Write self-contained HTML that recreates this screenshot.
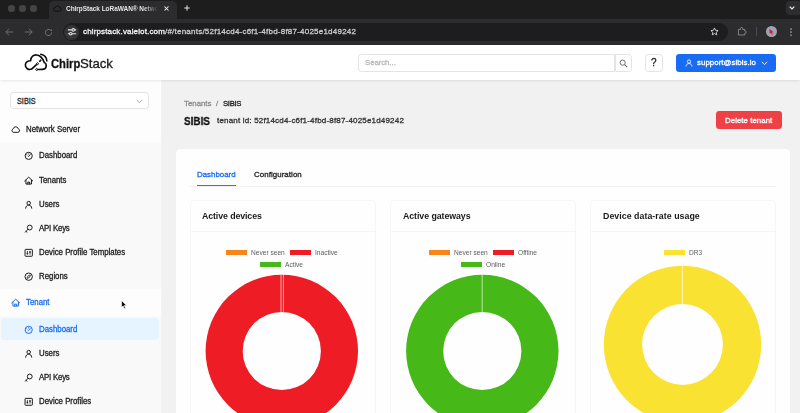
<!DOCTYPE html>
<html lang="en">
<head>
<meta charset="utf-8">
<title>ChirpStack LoRaWAN® Network Server</title>
<style>
*{box-sizing:border-box;margin:0;padding:0}
html,body{width:800px;height:413px;overflow:hidden;background:#f1f1f1;font-family:"Liberation Sans",Arial,sans-serif;color:#1f1f1f;font-size:7.7px;-webkit-font-smoothing:antialiased}
.abs{position:absolute}
.t{position:absolute;white-space:nowrap;line-height:10px;height:10px;transform:translateY(-50%);-webkit-text-stroke:.3px currentColor;will-change:transform}
/* ---------- browser chrome ---------- */
#chrome{position:absolute;left:0;top:0;width:800px;height:44.500px;background:#2c2c2e}
#tabstrip{position:absolute;left:0;top:0;width:800px;height:19px;background:#1d1d1e}
#tab{position:absolute;left:49px;top:1.200px;width:128px;height:17.800px;background:#2c2c2e;border-radius:5px 5px 0 0}
.light{position:absolute;top:5.2px;width:6.6px;height:6.6px;border-radius:50%;background:#454547}
#urlbar{position:absolute;left:63px;top:22.900px;width:665px;height:18.400px;border-radius:9.200px;background:#1d1d1f}
#siteinfo{position:absolute;left:1.400px;top:1.700px;width:15px;height:15px;border-radius:50%;background:#343436}
/* ---------- page ---------- */
#header{position:absolute;left:0;top:44.500px;width:800px;height:35px;background:#fff;box-shadow:0 1px 2.500px rgba(0,0,0,.09);z-index:5}
#sider{position:absolute;left:0;top:79px;width:162.300px;height:334px;background:#fdfdfd;border-right:1px solid #f3f3f3}
.subbg{position:absolute;left:0;width:161.300px;background:#f9f9f9}
.mi{position:absolute;white-space:nowrap;line-height:10px;height:10px;transform:translateY(-50%) scaleX(.95);transform-origin:0 50%;font-size:8.260px;color:#222;-webkit-text-stroke:.3px currentColor}
.ico{position:absolute;overflow:visible}
.btn{position:absolute;border-radius:3.3px;border:1px solid #e4e4e4;background:#fff}
.card{position:absolute;background:#fefefe;border:1px solid #f6f6f6;border-radius:4px}
.ctitle{will-change:transform;position:absolute;font-weight:700;font-size:8.8px;line-height:12px;height:12px;white-space:nowrap;transform:translateY(-50%);color:#1a1a1a}
.lg{position:absolute;height:5.600px}
.lt{will-change:transform;position:absolute;white-space:nowrap;font-size:6.6px;line-height:8px;height:8px;transform:translateY(-50%);color:#5c5c5c}
</style>
</head>
<body>

<!-- ================= BROWSER CHROME ================= -->
<div id="chrome">
  <div id="tabstrip">
    <div class="light" style="left:8.4px"></div>
    <div class="light" style="left:19.2px"></div>
    <div class="light" style="left:30px"></div>
    <div id="tab">
      <svg class="ico" style="left:4px;top:3.400px" width="8.600" height="6.700" viewBox="0 0 18 14"><path d="M5 12.800h9a3.500 3.500 0 0 0 .600-6.900A5 5 0 0 0 5 5 3.900 3.900 0 0 0 5 12.800z" fill="none" stroke="#0e0e0f" stroke-width="2"/></svg>
      <div class="t" style="left:17px;top:7.500px;font-size:6.500px;font-weight:700;letter-spacing:-.04px;-webkit-text-stroke:0;color:#e2e2e3;width:92px;overflow:hidden;-webkit-mask-image:linear-gradient(90deg,#000 84%,transparent 100%)">ChirpStack LoRaWAN® Network Server</div>
      <svg class="ico" style="left:115.300px;top:4.600px" width="5" height="5" viewBox="0 0 5 5"><path d="M.500.500l4 4M4.500.500l-4 4" stroke="#ededed" stroke-width="1.050" fill="none"/></svg>
    </div>
    <svg class="ico" style="left:183.500px;top:5.400px" width="6" height="6" viewBox="0 0 6 6"><path d="M3 .300v5.400M.300 3h5.400" stroke="#e4e4e4" stroke-width="1" fill="none"/></svg>
    <div class="abs" style="left:785.500px;top:1.200px;width:16px;height:14px;border-radius:4px;background:#2d2d2f"></div>
    <svg class="ico" style="left:789.200px;top:6.300px" width="6" height="4" viewBox="0 0 6 4"><path d="M.700.700 3 3 5.300.700" fill="none" stroke="#f0f0f0" stroke-width="1.200"/></svg>
  </div>
  <!-- nav buttons -->
  <svg class="ico" style="left:5px;top:28px" width="9" height="8" viewBox="0 0 9 8"><path d="M4 .8.8 4 4 7.2M.8 4h7.4" fill="none" stroke="#6c6c70" stroke-width="1"/></svg>
  <svg class="ico" style="left:24px;top:28px" width="9" height="8" viewBox="0 0 9 8"><path d="M5 .8 8.2 4 5 7.2M8.2 4H.8" fill="none" stroke="#6c6c70" stroke-width="1"/></svg>
  <svg class="ico" style="left:44px;top:27.5px" width="9" height="9" viewBox="0 0 9 9"><path d="M7.6 4.5a3.1 3.1 0 1 1-1-2.3" fill="none" stroke="#77777b" stroke-width="1"/><path d="M7.9.9v2.2H5.7z" fill="#77777b"/></svg>
  <div id="urlbar">
    <div id="siteinfo"></div>
    <svg class="ico" style="left:4.900px;top:5.400px" width="8" height="7.600" viewBox="0 0 8 7.600"><path d="M.300 1.900h3M6.600 1.900h1.100M.300 5.700h1.100M4.400 5.700h3.300" stroke="#e4e4e6" stroke-width="1.100" fill="none" stroke-linecap="round"/><circle cx="5.200" cy="1.900" r="1.250" fill="none" stroke="#e4e4e6" stroke-width="1.050"/><circle cx="2.800" cy="5.700" r="1.250" fill="none" stroke="#e4e4e6" stroke-width="1.050"/></svg>
    <div class="t" style="left:19.8px;top:9.2px;font-size:8px;letter-spacing:.225px;color:#c9c9cb"><span style="color:#f4f4f4;letter-spacing:.15px">chirpstack.valeiot.com</span>/#/tenants/52f14cd4-c6f1-4fbd-8f87-4025e1d49242</div>
    <svg class="ico" style="left:647px;top:4.600px" width="9" height="9" viewBox="0 0 24 24"><path d="M12 2.6l2.9 6.2 6.7.8-5 4.6 1.4 6.7-6-3.4-6 3.4 1.400-6.700-5-4.600 6.700-.800z" fill="none" stroke="#e8e8e8" stroke-width="2.2" stroke-linejoin="round"/></svg>
  </div>
  <!-- extension / avatar / menu -->
  <svg class="ico" style="left:736.700px;top:25.800px" width="9.600" height="9.600" viewBox="0 0 24 24"><path d="M3.500 8.500h5.300V6.300a2.700 2.700 0 0 1 5.400 0v2.200h5.300v4.300h1a2.600 2.600 0 0 1 0 5.200h-1v4.500h-16z" fill="none" stroke="#8f8f93" stroke-width="2.200" stroke-linejoin="round"/></svg>
  <div class="abs" style="left:755.5px;top:27px;width:1px;height:9px;background:#4d4d50"></div>
  <div class="abs" style="left:765.600px;top:26.100px;width:11.400px;height:11.400px;border-radius:50%;background:#a3a2b4"></div>
  <svg class="ico" style="left:768.200px;top:28.300px" width="6.500" height="6.500" viewBox="0 0 6 6"><path d="M1.300.800 5.200 3.900 3.600 4.100 4.400 5.700 3.400 5.900 2.600 4.400 1.500 5.300z" fill="#d01f2e"/></svg>
  <div class="abs" style="left:790.300px;top:28px;width:1.700px;height:1.700px;border-radius:50%;background:#77777b;box-shadow:0 3.100px 0 #77777b,0 6.200px 0 #77777b"></div>
</div>

<!-- ================= APP HEADER ================= -->
<div id="header">
  <!-- logo -->
  <svg class="ico" style="left:20.900px;top:4.500px" width="38" height="26.600" viewBox="0 0 590 413">
    <g fill="none" stroke="#0c0c0c" stroke-width="25" stroke-linecap="round" stroke-linejoin="round">
      <path d="M248 236 165 312C120 330 62 300 68 245C72 200 110 178 150 182C150 120 200 88 240 92C292 96 338 150 360 208C410 235 400 316 335 316L262 318"/>
      <path d="M308 82C358 91 398 132 401 186"/>
      <path d="M292 190l14-15" stroke-width="27"/>
    </g>
    <circle cx="256" cy="228" r="15" fill="#fff" stroke="#0c0c0c" stroke-width="15"/>
    <circle cx="243" cy="318" r="15" fill="#fff" stroke="#0c0c0c" stroke-width="15"/>
  </svg>
  <div class="t" style="left:50.600px;top:19.600px;font-size:12.800px;line-height:16px;height:16px;color:#111"><b style="display:inline-block;transform:scaleX(.875);transform-origin:0 50%">Chirp</b><span style="display:inline-block;font-weight:400;color:#1a1a1a;margin-left:-4.300px;transform:scaleX(1.03);transform-origin:0 50%">Stack</span></div>
  <!-- search -->
  <div class="btn" style="left:358px;top:9.700px;width:257px;height:17.400px;border-radius:3.300px 0 0 3.300px"></div>
  <div class="t" style="left:364.500px;top:18.500px;color:#b9b9b9">Search...</div>
  <div class="btn" style="left:614.500px;top:9.700px;width:17.500px;height:17.400px;border-radius:0 3.300px 3.300px 0"></div>
  <svg class="ico" style="left:619px;top:14px" width="9" height="9" viewBox="0 0 16 16"><circle cx="6.500" cy="6.500" r="4.600" fill="none" stroke="#666" stroke-width="1.700"/><path d="M10 10l4.500 4.500" stroke="#666" stroke-width="1.900"/></svg>
  <!-- help -->
  <div class="btn" style="left:645.200px;top:9.700px;width:17.500px;height:17.400px"></div>
  <div class="t" style="left:650.800px;top:18.500px;font-size:10px;line-height:12px;height:12px;color:#222">?</div>
  <!-- user -->
  <div class="abs" style="left:676px;top:9.500px;width:99.800px;height:17.600px;border-radius:3.300px;background:#186bf2"></div>
  <svg class="ico" style="left:684.500px;top:14.300px" width="8" height="8" viewBox="0 0 16 16"><circle cx="8" cy="5" r="3.300" fill="none" stroke="#fff" stroke-width="1.600"/><path d="M2 15c.300-4 2.800-6 6-6s5.700 2 6 6" fill="none" stroke="#fff" stroke-width="1.600"/></svg>
  <div class="t" style="left:697px;top:18.300px;font-size:7.9px;letter-spacing:.03px;color:#fff">support@sibis.io</div>
  <svg class="ico" style="left:760.500px;top:16.500px" width="7" height="5" viewBox="0 0 7 5"><path d="M.800.800 3.500 3.600 6.200.800" fill="none" stroke="#fff" stroke-width=".900"/></svg>
</div>

<!-- ================= SIDEBAR ================= -->
<div id="sider"></div>
<div id="sidercontent" class="abs" style="left:0;top:0;width:162px;height:413px">
  <div class="btn" style="left:10px;top:91.800px;width:138.500px;height:17.300px"></div>
  <div class="mi" style="left:16.800px;top:100.700px;font-size:8.600px;transform:translateY(-50%) scaleX(.85)">SIBIS</div>
  <svg class="ico" style="left:135.500px;top:98.800px" width="7" height="5" viewBox="0 0 7 5"><path d="M.600.800 3.500 3.700 6.400.800" fill="none" stroke="#a6a6a6" stroke-width="1"/></svg>
  <div class="subbg" style="top:142px;height:147px"></div>
  <div class="subbg" style="top:315.500px;height:98px"></div>
  <div class="abs" style="left:.500px;top:318.300px;width:158px;height:21.700px;border-radius:3px 4.400px 4.400px 3px;background:#e6f4ff"></div>
  <svg class="ico" style="left:11.25px;top:125.05px" width="9.400" height="9.400" viewBox="0 0 16 16"><path d="M4.300 12.500h7.400a3 3 0 0 0 .700-5.900 4.400 4.400 0 0 0-8.600-.100A3.100 3.100 0 0 0 4.300 12.500z" fill="none" stroke="#1c1c1c" stroke-width="1.700" stroke-linejoin="round"/></svg>
  <div class="mi" style="left:25.6px;top:130.0px;color:#1c1c1c">Network Server</div>
  <svg class="ico" style="left:24.35px;top:151.05px" width="9.400" height="9.400" viewBox="0 0 16 16"><circle cx="8" cy="8.300" r="6.100" fill="none" stroke="#1c1c1c" stroke-width="1.700"/><path d="M7.800 9.300l2.800-3.200" stroke="#1c1c1c" stroke-width="1.700" stroke-linecap="round"/><path d="M4.400 6.400l.900.600M8 4.300v1" stroke="#1c1c1c" stroke-width="1.200" stroke-linecap="round"/></svg>
  <div class="mi" style="left:38.7px;top:156.0px;color:#1c1c1c">Dashboard</div>
  <svg class="ico" style="left:24.35px;top:175.65px" width="9.400" height="9.400" viewBox="0 0 16 16"><path d="M1.200 8.400 8 2l6.800 6.400M3.300 7.200v6.500h9.400V7.200M6.400 13.700v-3.300h3.200v3.300" fill="none" stroke="#1c1c1c" stroke-width="1.700" stroke-linejoin="round" stroke-linecap="round"/></svg>
  <div class="mi" style="left:38.7px;top:180.6px;color:#1c1c1c">Tenants</div>
  <svg class="ico" style="left:24.35px;top:199.75px" width="9.400" height="9.400" viewBox="0 0 16 16"><circle cx="8" cy="5.300" r="3" fill="none" stroke="#1c1c1c" stroke-width="1.700"/><path d="M2.800 14c.300-3.500 2.400-5.200 5.200-5.200s4.900 1.700 5.200 5.200" fill="none" stroke="#1c1c1c" stroke-width="1.700" stroke-linecap="round"/></svg>
  <div class="mi" style="left:38.7px;top:204.7px;color:#1c1c1c">Users</div>
  <svg class="ico" style="left:24.35px;top:223.95px" width="9.400" height="9.400" viewBox="0 0 16 16"><circle cx="9.800" cy="6" r="4.100" fill="none" stroke="#1c1c1c" stroke-width="1.700"/><path d="M6.800 9.100 2.200 13.900M3.500 12.500l1.600 1.500" fill="none" stroke="#1c1c1c" stroke-width="1.700" stroke-linecap="round"/></svg>
  <div class="mi" style="left:38.7px;top:228.9px;color:#1c1c1c;letter-spacing:-.22px">API Keys</div>
  <svg class="ico" style="left:24.35px;top:247.65px" width="9.400" height="9.400" viewBox="0 0 16 16"><rect x="1.800" y="2.300" width="12.400" height="11.800" rx="1" fill="none" stroke="#1c1c1c" stroke-width="1.700"/><path d="M5.800 5v6.400M10.200 5v6.400" stroke="#1c1c1c" stroke-width="1.300"/><rect x="4.500" y="8.300" width="2.600" height="2" fill="#1c1c1c"/><rect x="8.900" y="5.900" width="2.600" height="2" fill="#1c1c1c"/></svg>
  <div class="mi" style="left:38.7px;top:252.6px;color:#1c1c1c">Device Profile Templates</div>
  <svg class="ico" style="left:24.35px;top:271.65px" width="9.400" height="9.400" viewBox="0 0 16 16"><circle cx="8" cy="8" r="6.300" fill="none" stroke="#1c1c1c" stroke-width="1.700"/><path d="M11 5 9.300 9.300 5 11 6.700 6.700z" fill="none" stroke="#1c1c1c" stroke-width="1.300" stroke-linejoin="round"/></svg>
  <div class="mi" style="left:38.7px;top:276.6px;color:#1c1c1c">Regions</div>
  <svg class="ico" style="left:11.25px;top:297.85px" width="9.400" height="9.400" viewBox="0 0 16 16"><path d="M1.200 8.400 8 2l6.800 6.400M3.300 7.200v6.500h9.400V7.200M6.400 13.700v-3.300h3.200v3.300" fill="none" stroke="#1a6cf0" stroke-width="1.700" stroke-linejoin="round" stroke-linecap="round"/></svg>
  <div class="mi" style="left:25.6px;top:302.8px;color:#1a6cf0">Tenant</div>
  <svg class="ico" style="left:24.35px;top:324.85px" width="9.400" height="9.400" viewBox="0 0 16 16"><circle cx="8" cy="8.300" r="6.100" fill="none" stroke="#1a6cf0" stroke-width="1.700"/><path d="M7.800 9.300l2.800-3.200" stroke="#1a6cf0" stroke-width="1.700" stroke-linecap="round"/><path d="M4.400 6.400l.900.600M8 4.300v1" stroke="#1a6cf0" stroke-width="1.200" stroke-linecap="round"/></svg>
  <div class="mi" style="left:38.7px;top:329.8px;color:#1a6cf0">Dashboard</div>
  <svg class="ico" style="left:24.35px;top:349.05px" width="9.400" height="9.400" viewBox="0 0 16 16"><circle cx="8" cy="5.300" r="3" fill="none" stroke="#1c1c1c" stroke-width="1.700"/><path d="M2.800 14c.300-3.500 2.400-5.200 5.200-5.200s4.900 1.700 5.200 5.200" fill="none" stroke="#1c1c1c" stroke-width="1.700" stroke-linecap="round"/></svg>
  <div class="mi" style="left:38.7px;top:354.0px;color:#1c1c1c">Users</div>
  <svg class="ico" style="left:24.35px;top:373.15px" width="9.400" height="9.400" viewBox="0 0 16 16"><circle cx="9.800" cy="6" r="4.100" fill="none" stroke="#1c1c1c" stroke-width="1.700"/><path d="M6.800 9.100 2.200 13.900M3.500 12.500l1.600 1.500" fill="none" stroke="#1c1c1c" stroke-width="1.700" stroke-linecap="round"/></svg>
  <div class="mi" style="left:38.7px;top:378.1px;color:#1c1c1c;letter-spacing:-.22px">API Keys</div>
  <svg class="ico" style="left:24.35px;top:397.25px" width="9.400" height="9.400" viewBox="0 0 16 16"><rect x="1.800" y="2.300" width="12.400" height="11.800" rx="1" fill="none" stroke="#1c1c1c" stroke-width="1.700"/><path d="M5.800 5v6.400M10.200 5v6.400" stroke="#1c1c1c" stroke-width="1.300"/><rect x="4.500" y="8.300" width="2.600" height="2" fill="#1c1c1c"/><rect x="8.900" y="5.900" width="2.600" height="2" fill="#1c1c1c"/></svg>
  <div class="mi" style="left:38.7px;top:402.2px;color:#1c1c1c">Device Profiles</div>
  <svg class="ico" style="left:120.500px;top:299.600px;z-index:9" width="6" height="9.500" viewBox="0 0 12 19"><path d="M1 1v14l3.300-3.100 2.400 5.600 2.300-1-2.400-5.400h4.600z" fill="#0a0a0a" stroke="#fff" stroke-width="1.300" stroke-linejoin="round"/></svg>
</div>

<!-- ================= CONTENT ================= -->
<div id="content" class="abs" style="left:0;top:0;width:800px;height:413px">
  <div class="t" style="left:183.700px;top:104px;font-size:7.85px;color:#8c8c8c">Tenants</div>
  <div class="t" style="left:216.200px;top:104px;color:#8c8c8c">/</div>
  <div class="t" style="left:222.600px;top:104px;letter-spacing:-.3px;color:#222">SIBIS</div>
  <div class="t" style="left:184px;top:120.600px;font-size:11.200px;font-weight:700;line-height:14px;height:14px;color:#111;transform:translateY(-50%) scaleX(.885);transform-origin:0 50%">SIBIS</div>
  <div class="t" style="left:216.500px;top:120.500px;font-size:8px;letter-spacing:.184px;color:#333">tenant id: 52f14cd4-c6f1-4fbd-8f87-4025e1d49242</div>
  <div class="abs" style="left:716px;top:111.300px;width:65.500px;height:17.700px;border-radius:3.300px;background:#ef4046"></div>
  <div class="t" style="left:725px;top:121px;font-size:7.9px;letter-spacing:.03px;color:#fff">Delete tenant</div>

  <div class="abs" style="left:175.600px;top:149px;width:614.500px;height:280px;background:#fefefe;border-radius:4.400px"></div>
  <div class="abs" style="left:189px;top:186.300px;width:587px;height:1px;background:#f0f0f0"></div>
  <div class="t" style="left:197px;top:174.600px;font-size:7.9px;color:#1a6cf0">Dashboard</div>
  <div class="abs" style="left:197px;top:185.300px;width:38.500px;height:1.200px;background:#2a76f3"></div>
  <div class="t" style="left:253.500px;top:174.600px;font-size:7.9px;letter-spacing:.066px;color:#222">Configuration</div>
  <div class="card" style="left:189.5px;top:200px;width:186px;height:240px"></div>
  <div class="abs" style="left:189.5px;top:231px;width:186px;height:1px;background:#f5f5f5"></div>
  <div class="ctitle" style="left:202px;top:215.800px;letter-spacing:-.1px">Active devices</div>
  <div class="card" style="left:389.7px;top:200px;width:186px;height:240px"></div>
  <div class="abs" style="left:389.7px;top:231px;width:186px;height:1px;background:#f5f5f5"></div>
  <div class="ctitle" style="left:402.5px;top:215.800px;letter-spacing:-.065px">Active gateways</div>
  <div class="card" style="left:590px;top:200px;width:186px;height:240px"></div>
  <div class="abs" style="left:590px;top:231px;width:186px;height:1px;background:#f5f5f5"></div>
  <div class="ctitle" style="left:603px;top:215.800px;letter-spacing:.043px">Device data-rate usage</div>
  <div class="lg" style="left:226.2px;top:249.8px;width:21px;background:#f6861a"></div>
  <div class="lt" style="left:251px;top:253.0px">Never seen</div>
  <div class="lg" style="left:290.3px;top:249.8px;width:21px;background:#ee1c25"></div>
  <div class="lt" style="left:314.8px;top:253.0px">Inactive</div>
  <div class="lg" style="left:260.3px;top:261.8px;width:21px;background:#46b817"></div>
  <div class="lt" style="left:285.3px;top:265.0px">Active</div>
  <div class="lg" style="left:429.0px;top:249.8px;width:21px;background:#f6861a"></div>
  <div class="lt" style="left:453.6px;top:253.0px">Never seen</div>
  <div class="lg" style="left:492.9px;top:249.8px;width:21px;background:#ee1c25"></div>
  <div class="lt" style="left:517.5px;top:253.0px">Offline</div>
  <div class="lg" style="left:460.7px;top:261.8px;width:21px;background:#46b817"></div>
  <div class="lt" style="left:485.9px;top:265.0px">Online</div>
  <div class="lg" style="left:663.5px;top:249.8px;width:21px;background:#fae232"></div>
  <div class="lt" style="left:688.5px;top:253.0px">DR3</div>
  <svg class="abs" style="left:0;top:0" width="800" height="413" viewBox="0 0 800 413">
    <path d="M205.60 351.00a76.2 76.2 0 1 0 152.4 0a76.2 76.2 0 1 0 -152.4 0zM242.70 351.00a39.1 39.1 0 1 0 78.2 0a39.1 39.1 0 1 0 -78.2 0z" fill="#ee1c25" fill-rule="evenodd"/><path d="M281.00 274.50V312.20" stroke="#fff" stroke-opacity="0.9" stroke-width="0.7"/><path d="M283.40 274.50V312.20" stroke="#fff" stroke-opacity="0.8" stroke-width="0.7"/>
    <path d="M406.10 351.00a76.2 76.2 0 1 0 152.4 0a76.2 76.2 0 1 0 -152.4 0zM443.20 351.00a39.1 39.1 0 1 0 78.2 0a39.1 39.1 0 1 0 -78.2 0z" fill="#46b817" fill-rule="evenodd"/><path d="M482.20 274.50V312.20" stroke="#fff" stroke-opacity="0.8" stroke-width="0.8"/>
    <path d="M603.80 344.50a78.7 78.7 0 1 0 157.4 0a78.7 78.7 0 1 0 -157.4 0zM642.10 344.50a40.4 40.4 0 1 0 80.8 0a40.4 40.4 0 1 0 -80.8 0z" fill="#fae232" fill-rule="evenodd"/><path d="M682.40 265.50V304.40" stroke="#fff" stroke-opacity="0.85" stroke-width="0.8"/>
  </svg>
</div>

</body>
</html>
